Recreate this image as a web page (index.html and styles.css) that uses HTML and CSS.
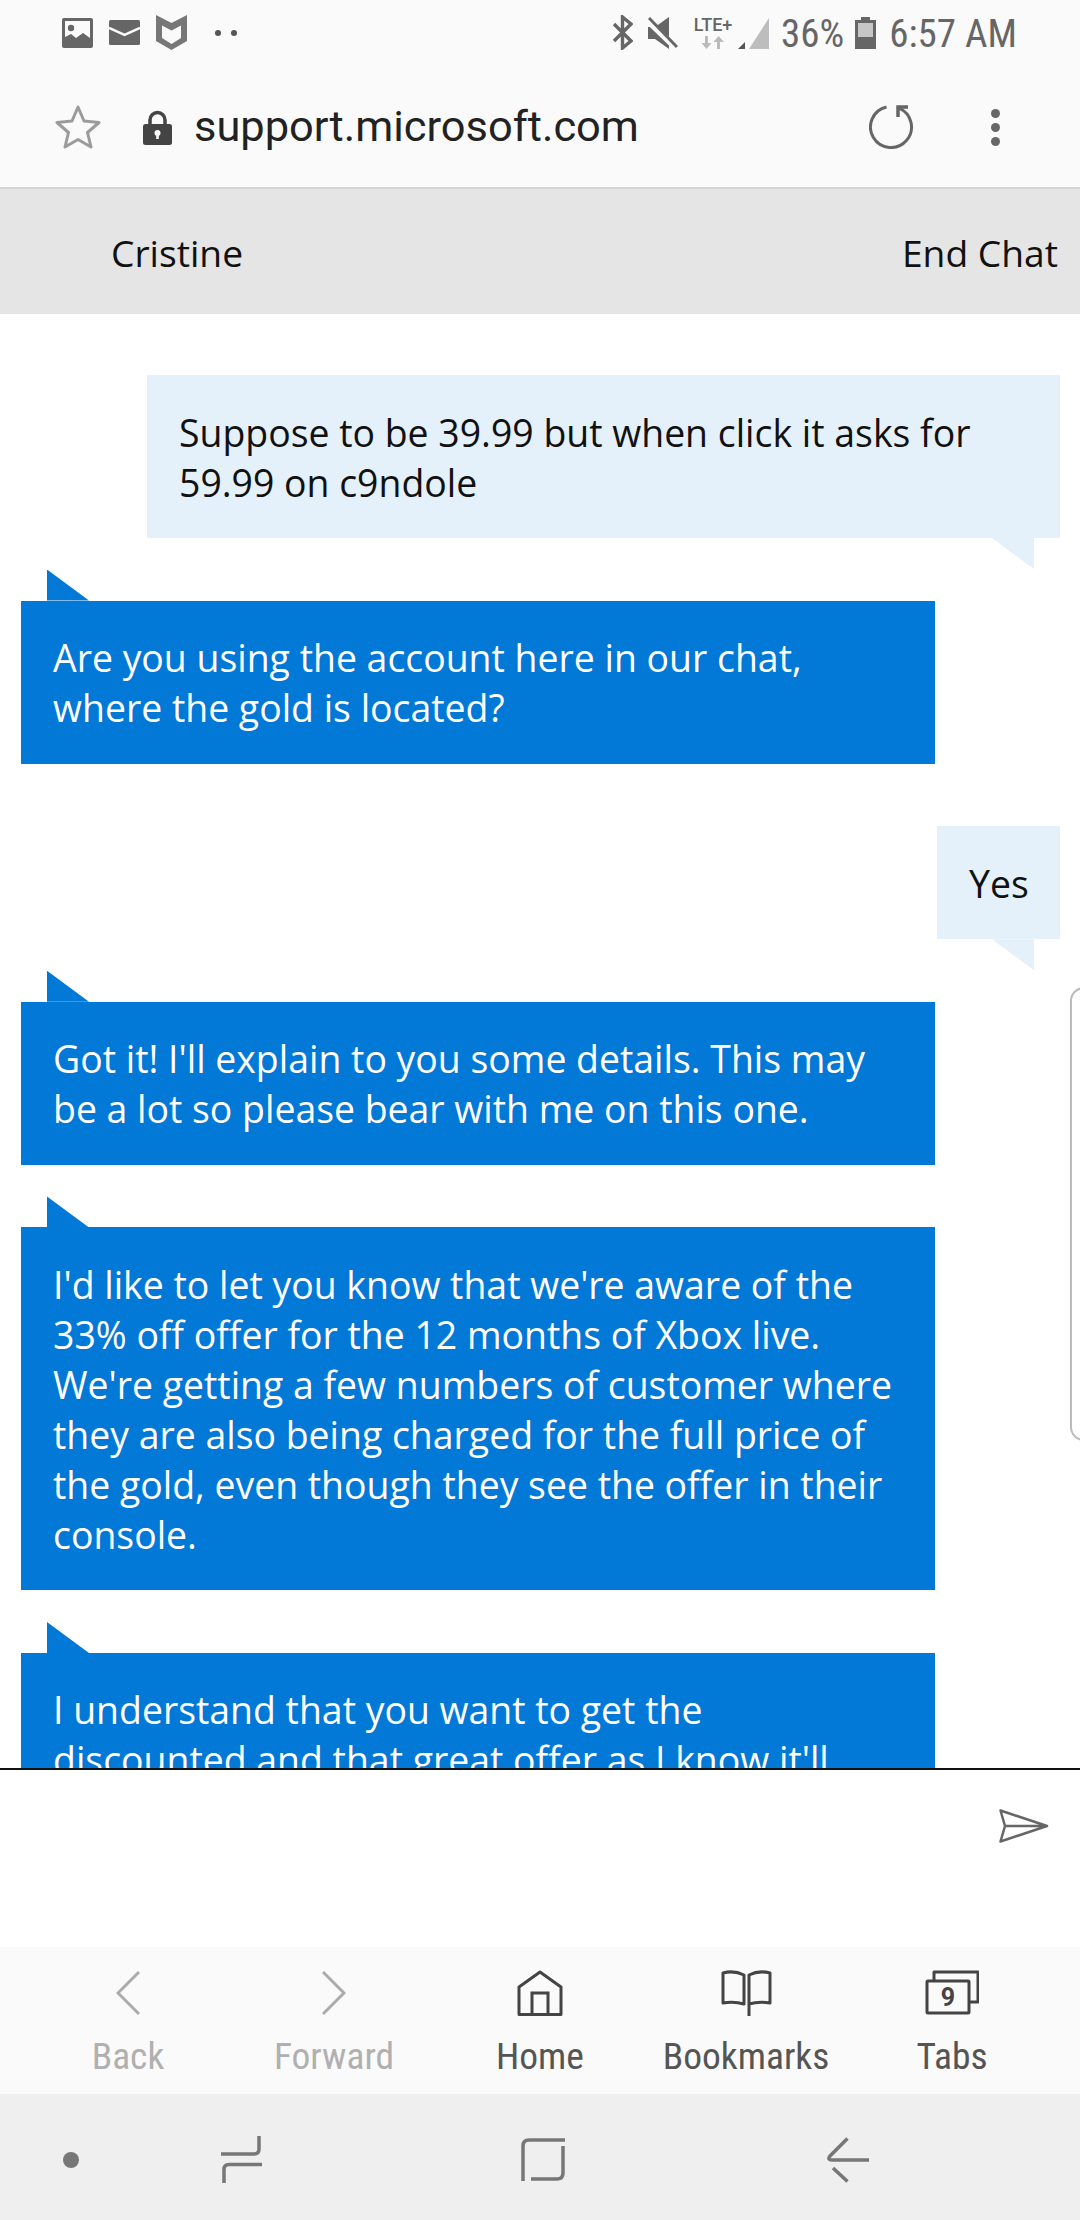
FILE: index.html
```html
<!DOCTYPE html>
<html lang="en">
<head>
<meta charset="utf-8">
<title>Support chat</title>
<link rel="stylesheet" href="styles.css">
</head>
<body>
<div class="page">
  <div class="status">
    <svg class="i31" width="31" height="30" viewBox="0 0 31 30"><rect width="31" height="30" rx="2" fill="#666"/><rect x="3" y="3" width="25" height="24" fill="#fafafa"/><circle cx="9" cy="10" r="3.2" fill="#666"/><path d="M3 19l6-3 5 4 7-5 7 5v7H3z" fill="#666"/></svg>
    <svg class="i31" width="31" height="25" viewBox="0 0 31 25"><rect width="31" height="25" rx="1.5" fill="#666"/><path d="M0 8l15.5 7L31 8" fill="none" stroke="#fafafa" stroke-width="2.5"/></svg>
    <svg class="i31" width="31" height="35" viewBox="0 0 31 35"><path fill-rule="evenodd" d="M0 0l15.500 8L31 0v26l-15.500 9L0 26zM6 10.500V23l9.500 6 9.500-6V10.500l-9.500 5z" fill="#777"/></svg>
    <span class="more"><i></i><i></i></span>
    <div class="status-right">
      <svg class="bt" width="21" height="35" viewBox="0 0 21 35"><path d="M2 9l17 17-8.500 7V2l8.500 7L2 26" fill="none" stroke="#666" stroke-width="3.400"/></svg>
      <svg class="mute" width="30" height="32" viewBox="0 0 30 32"><path d="M0 10h7L21 0v32L7 22H0z" fill="#666"/><path d="M-1 3l30 29" stroke="#fafafa" stroke-width="6"/><path d="M1 1l28 29" stroke="#666" stroke-width="3"/></svg>
      <span class="lte"><span class="lte-t">LTE+</span><svg width="24" height="13" viewBox="0 0 24 13"><path d="M4 0h3v7h3.500l-5 6-5-6H4zM16 13h3V6h4l-5.500-6-5 6H16z" fill="#bbb"/></svg></span>
      <svg class="sig" width="31" height="32" viewBox="0 0 31 32"><path d="M0 32l7-7v7z" fill="#555"/><path d="M11 32L31 1v31z" fill="#bdbdbd"/></svg>
      <span class="st-t pct">36%</span>
      <svg class="bat" width="21" height="32" viewBox="0 0 21 32"><path d="M6 0h9v3h6v29H0V3h6z" fill="#666"/><rect x="3" y="6" width="15" height="14" fill="#c6c6c6"/></svg>
      <span class="st-t time">6:57 AM</span>
    </div>
  </div>

  <div class="urlbar">
    <svg class="star" width="46" height="46" viewBox="0 0 46 46"><path d="M23 3l6 14 15 1.500-11.500 10L36 43l-13-7.500L10 43l3.500-14.500L2 18.500 17 17z" fill="none" stroke="#9b9b9b" stroke-width="3" stroke-linejoin="round"/></svg>
    <svg class="lock" width="29" height="35" viewBox="0 0 29 35"><path d="M7 16V10a7.500 7.500 0 0 1 15 0v6" fill="none" stroke="#444" stroke-width="3.500"/><rect y="14" width="29" height="21" rx="2.500" fill="#444"/><circle cx="14.500" cy="23" r="3" fill="#fafafa"/><rect x="13.200" y="23" width="2.600" height="6" fill="#fafafa"/></svg>
    <span class="url">support.microsoft.com</span>
    <svg class="reload" width="46" height="44" viewBox="0 0 46 44"><path d="M17.500 2A20.500 20.500 0 1 0 30 3.130" fill="none" stroke="#666" stroke-width="3"/><path d="M39 2H29V12" fill="none" stroke="#666" stroke-width="3.500"/></svg>
    <span class="kebab"><i></i><i></i><i></i></span>
  </div>

  <div class="chathead"><span>Cristine</span><span>End Chat</span></div>

  <div class="chat">
    <div class="msg user wide">Suppose to be 39.99 but when click it asks for<br>59.99 on c9ndole</div>
    <div class="msg agent">Are you using the account here in our chat,<br>where the gold is located?</div>
    <div class="msg user short">Yes</div>
    <div class="msg agent">Got it! I'll explain to you some details. This may<br>be a lot so please bear with me on this one.</div>
    <div class="msg agent">I'd like to let you know that we're aware of the<br>33% off offer for the 12 months of Xbox live.<br>We're getting a few numbers of customer where<br>they are also being charged for the full price of<br>the gold, even though they see the offer in their<br>console.</div>
    <div class="msg agent">I understand that you want to get the<br>discounted and that great offer as I know it'll</div>
    <div class="handle"></div>
  </div>

  <div class="composer">
    <svg class="send" width="50" height="34" viewBox="0 0 50 34"><path d="M1.500 1.500L48 17 1.500 32.500 6 17zM6 17h42" fill="none" stroke="#666" stroke-width="2.500" stroke-linejoin="round"/></svg>
  </div>

  <nav class="tabs">
    <div class="tab off"><svg width="24" height="46" viewBox="0 0 24 46"><path d="M23 2L2 23l21 21" fill="none" stroke="#aaa" stroke-width="3"/></svg><span>Back</span></div>
    <div class="tab off"><svg width="24" height="46" viewBox="0 0 24 46"><path d="M1 2l21 21L1 44" fill="none" stroke="#aaa" stroke-width="3"/></svg><span>Forward</span></div>
    <div class="tab"><svg width="46" height="46" viewBox="0 0 46 46"><path d="M23 2L44 17v27.500H2V17z" fill="none" stroke="#444" stroke-width="3" stroke-linejoin="round"/><path d="M15 44V23h16v21" fill="none" stroke="#444" stroke-width="3"/></svg><span>Home</span></div>
    <div class="tab"><svg width="51" height="46" viewBox="0 0 51 46"><path d="M23 5Q13 0 2 3v30q11-2 21 1zM28 46V5Q38 0 49 3v30q-11-2-21 1" fill="none" stroke="#444" stroke-width="3" stroke-linejoin="round"/></svg><span>Bookmarks</span></div>
    <div class="tab"><svg width="54" height="46" viewBox="0 0 54 46"><path d="M9 10V2h44v30h-9" fill="none" stroke="#444" stroke-width="3" stroke-linejoin="round"/><rect x="2" y="11" width="42" height="32" fill="none" stroke="#444" stroke-width="3" rx="1"/><text x="23" y="36" class="tabnum">9</text></svg><span>Tabs</span></div>
  </nav>

  <div class="sysnav">
    <i class="sysdot"></i>
    <svg width="41" height="47" viewBox="0 0 41 47"><path d="M38 0v13q0 5-5 5H0M41 28.500H8q-5 0-5 5V47" fill="none" stroke="#777" stroke-width="3.500"/></svg>
    <svg width="44" height="43" viewBox="0 0 44 43"><path d="M2 43V8q0-6 6-6h36M42 8v27q0 6-6 6H10" fill="none" stroke="#777" stroke-width="3.500"/></svg>
    <svg width="42" height="46" viewBox="0 0 42 46"><path d="M20.500 1.500L3 19q-3 4 2 4h37M6 31l14.500 13.500" fill="none" stroke="#777" stroke-width="3.500"/></svg>
  </div>
</div>
</body>
</html>
```

FILE: styles.css
```css
* { box-sizing: border-box; }
html, body { margin: 0; padding: 0; background: #fff; }
.page {
  width: 1080px; height: 2220px; overflow: hidden;
  display: flex; flex-direction: column;
  font-family: "Open Sans", "Noto Sans", sans-serif;
}

.status {
  height: 65px; flex: none; background: #fafafa;
  display: flex; align-items: center; gap: 16px;
  padding: 0 63px 0 62px;
}
.more { display: flex; gap: 10px; margin-left: 12px; }
.more i { width: 6px; height: 6px; border-radius: 50%; background: #555; display: block; }
.status-right { margin-left: auto; display: flex; align-items: center; }
.mute { margin-left: 15px; }
.lte { margin-left: 15px; width: 40px; display: flex; flex-direction: column; align-items: center; }
.lte-t { font: 500 18px/16px Roboto, sans-serif; color: #666; white-space: nowrap; }
.lte svg { margin-top: 3px; }
.sig { margin-left: 5px; }
.st-t { font: 400 39px/40px Roboto, sans-serif; font-stretch: 75%; color: #666; white-space: nowrap; position: relative; top: 1px; }
.pct { margin-left: 12px; }
.bat { margin-left: 11px; }
.time { margin-left: 13px; }

.urlbar {
  height: 124px; flex: none; background: #fafafa;
  border-bottom: 2px solid #d4d4d4;
  display: flex; align-items: center;
  padding: 2px 80px 0 55px;
}
.lock { margin-left: 42px; }
.url { margin-left: 22px; font: 400 43.400px/50px Roboto, sans-serif; color: #222; }
.reload { margin-left: auto; }
.kebab { margin-left: 76px; display: flex; flex-direction: column; gap: 5px; }
.kebab i { width: 9px; height: 9px; border-radius: 50%; background: #666; display: block; }

.chathead {
  height: 125px; flex: none; background: #e5e5e5;
  display: flex; align-items: center; justify-content: space-between;
  padding: 2px 22px 0 111px;
  font-size: 37.200px; color: #111;
}

.chat {
  flex: 1; min-height: 0; overflow: hidden; position: relative;
  display: flex; flex-direction: column; gap: 62.600px;
  padding-top: 61px; background: #fff;
}
.msg {
  position: relative; flex: none;
  padding: 32.500px 32px 30.500px;
  font-size: 37.400px; line-height: 50px; white-space: nowrap;
}
.agent {
  width: 914px; margin-left: 21px;
  background: #0278d7; color: #fff;
}
.agent::before {
  content: ""; position: absolute; left: 26px; top: -31px;
  width: 42px; height: 31px; background: #0278d7;
  clip-path: polygon(0 0, 0 100%, 100% 100%);
}
.user {
  align-self: flex-end; margin-right: 20px;
  background: #e4f0fa; color: #111;
}
.user.wide { width: 913px; }
.user.short { width: 123px; }
.user::after {
  content: ""; position: absolute; right: 26px; bottom: -31px;
  width: 42px; height: 31px; background: #e4f0fa;
  clip-path: polygon(0 0, 100% 0, 100% 100%);
}
.handle {
  position: absolute; left: 1070px; top: 673px;
  width: 20px; height: 454px;
  border: 2px solid #bbb; border-radius: 14px 0 0 14px;
}

.composer {
  height: 179px; flex: none; background: #fff;
  border-top: 2px solid #111;
  display: flex; justify-content: flex-end; align-items: flex-start;
  padding: 39px 31px 0 0;
}

.tabs {
  height: 147px; flex: none; background: #fafafa;
  display: grid; grid-template-columns: repeat(5, 206px);
  padding: 23px 25px 0;
}
.tab { display: flex; flex-direction: column; align-items: center; color: #555; }
.tab span { font: 400 37.500px/44px Roboto, sans-serif; font-stretch: 75%; margin-top: 18px; white-space: nowrap; }
.tab.off { color: #b0b0b0; }
.tabnum { font: 700 25px Roboto, sans-serif; fill: #444; text-anchor: middle; }

.sysnav {
  height: 126px; flex: none; background: #efefef;
  display: flex; align-items: center;
  padding: 5px 0 0 63px;
}
.sysdot { width: 16px; height: 16px; border-radius: 50%; background: #777; display: block; }
.sysnav svg:nth-of-type(1) { margin-left: 142px; }
.sysnav svg:nth-of-type(2) { margin-left: 259px; }
.sysnav svg:nth-of-type(3) { margin-left: 262px; }
```
